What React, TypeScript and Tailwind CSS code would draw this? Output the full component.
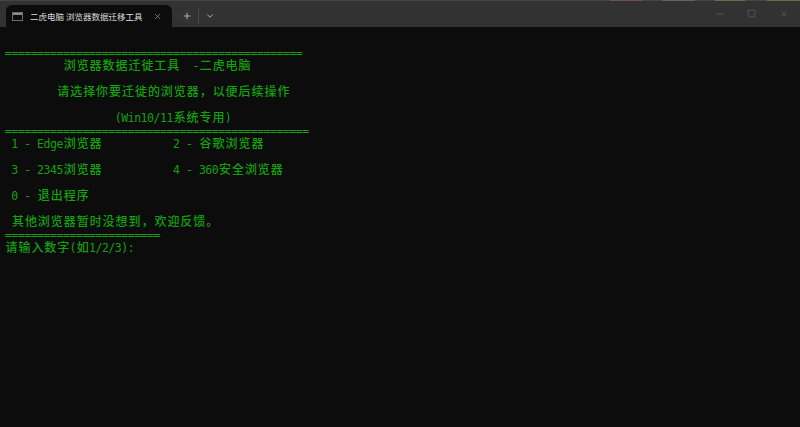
import { Minus, Plus, Square, X, ChevronDown } from "lucide-react";

const lines = [
  "==============================================",
  "         浏览器数据迁徙工具  -二虎电脑",
  "",
  "        请选择你要迁徙的浏览器，以便后续操作",
  "",
  "                 (Win10/11系统专用)",
  "===============================================",
  " 1 - Edge浏览器           2 - 谷歌浏览器",
  "",
  " 3 - 2345浏览器           4 - 360安全浏览器",
  "",
  " 0 - 退出程序",
  "",
  " 其他浏览器暂时没想到，欢迎反馈。",
  "========================",
  "请输入数字(如1/2/3):",
];

function Row({ text }: { text: string }) {
  return (
    <div className="flex h-[13px] items-center whitespace-pre">
      {Array.from(text).map((ch, i) =>
        ch.charCodeAt(0) > 255 ? (
          <span key={i} className="flex w-[12.96px] shrink-0 justify-center text-[12px] leading-[13px]">{ch}</span>
        ) : (
          <span key={i} className="flex w-[6.48px] shrink-0 justify-center text-[11.5px] leading-[13px]">{ch}</span>
        )
      )}
    </div>
  );
}

export default function App() {
  return (
    <div className="flex flex-col w-[800px] h-[427px] overflow-hidden bg-[#0c0c0c] font-['Noto_Sans_CJK_SC',sans-serif]">
      <header className="relative flex h-[27px] shrink-0 items-end bg-[#323232] border-t border-[#454545] pl-[6px]">
        {/* wallpaper showing through the top edge */}
        <div className="absolute -top-px left-[610px] h-px w-[32px] bg-[#6b5058]" />
        <div className="absolute -top-px left-[662px] h-px w-[33px] bg-[#56666e]" />
        <div className="absolute -top-px left-[715px] h-px w-[30px] bg-[#756a48]" />
        <div className="absolute -top-px left-[767px] h-px w-[33px] bg-[#756a48]" />
        <div className="flex h-[22px] w-[166px] items-center rounded-t-[6px] bg-[#0c0c0c] pl-[6px]">
          <svg width="11" height="9" viewBox="0 0 11 9" className="shrink-0">
            <rect x="0.5" y="0.5" width="10" height="8" fill="#0c0c0c" stroke="#6e6e6e" />
            <rect x="1" y="1" width="9" height="2" fill="#8c8c8c" />
          </svg>
          <span className="ml-[7px] w-[113px] whitespace-nowrap text-[8.5px] leading-[14px] text-[#dcdcdc]">二虎电脑 浏览器数据迁移工具</span>
          <X size={9} strokeWidth={1.5} className="ml-[10px] text-[#b8b8b8]" />
        </div>
        <div className="flex h-[22px] items-center text-[#c8c8c8]">
          <Plus size={10} strokeWidth={2} className="ml-[10px]" />
          <span className="ml-[6px] h-[15px] w-px bg-[#4a4a4a]" />
          <ChevronDown size={10} strokeWidth={2} className="ml-[6px]" />
        </div>
        <div className="ml-auto flex h-[27px] items-center text-[#7c7c7c]">
          <Minus size={10} strokeWidth={1.2} className="mr-[22px]" />
          <Square size={9} strokeWidth={1.2} className="mr-[23px]" />
          <X size={10} strokeWidth={1.2} className="mr-[11px]" />
        </div>
      </header>
      <main className="flex-1 pl-[5px] pt-[20px] font-['DejaVu_Sans_Mono','Noto_Sans_CJK_SC',monospace] font-medium text-[#13a10e]">
        {lines.map((line, i) => (
          <Row key={i} text={line} />
        ))}
      </main>
    </div>
  );
}
